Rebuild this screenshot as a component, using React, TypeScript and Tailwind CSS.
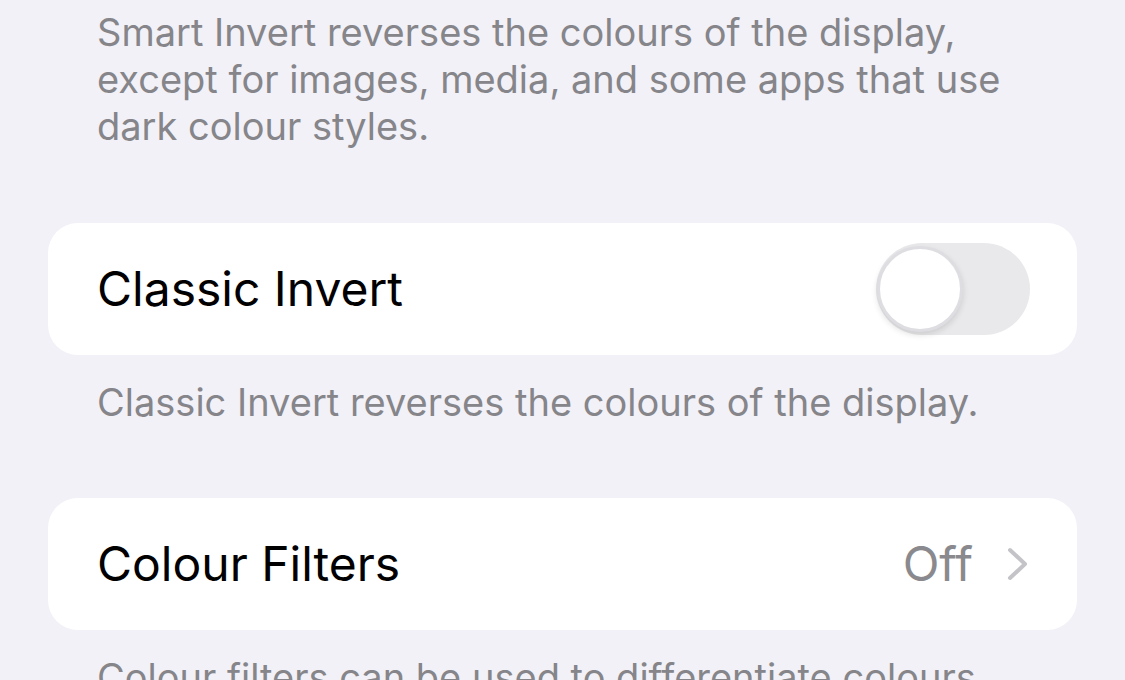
import { useState } from "react";

function Footer({ children }: { children: React.ReactNode }) {
  return (
    <p className="pl-[97px] pr-[100px] text-[38px] leading-[47px] text-[#85858a]">
      {children}
    </p>
  );
}

function Toggle({ on }: { on: boolean }) {
  return (
    <div
      className={`relative h-[92px] w-[154px] rounded-full ${
        on ? "bg-[#34c759]" : "bg-[#e9e9eb]"
      }`}
    >
      <span
        className={`absolute top-[3px] h-[86px] w-[86px] rounded-full border-[3px] border-[#dedee2] bg-white shadow-[0_3px_6px_rgba(0,0,0,0.12)] ${
          on ? "left-[65px]" : "left-[1px]"
        }`}
      />
    </div>
  );
}

export default function App() {
  const [invert, setInvert] = useState(false);

  return (
    <div
      className="h-[680px] w-[1125px] overflow-hidden bg-[#f2f1f7] pt-[9px]"
      style={{ fontFamily: "Inter, 'Noto Sans', sans-serif" }}
    >
      <Footer>
        Smart Invert reverses the colours of the display, except for images, media, and some apps that use dark
        colour styles.
      </Footer>

      {/* classic invert */}
      <div
        className="mx-[48px] mt-[73px] flex h-[132px] items-center justify-between rounded-[30px] bg-white pl-[49px] pr-[47px]"
        onClick={() => setInvert(!invert)}
      >
        <span className="text-[48px] text-black">Classic Invert</span>
        <Toggle on={invert} />
      </div>
      <div className="mt-[24px]">
        <Footer>Classic Invert reverses the colours of the display.</Footer>
      </div>

      {/* colour filters */}
      <div className="mx-[48px] mt-[72px] flex h-[132px] items-center justify-between rounded-[30px] bg-white pl-[49px] pr-[48px]">
        <span className="text-[48px] text-black">Colour Filters</span>
        <div className="flex items-center gap-[34px]">
          <span className="text-[48px] text-[#8a8a8e]">Off</span>
          <svg width="22" height="34" viewBox="0 0 22 34" fill="none">
            <path
              d="M3 3 L18 17 L3 31"
              stroke="#c4c4c8"
              strokeWidth="4"
              strokeLinecap="round"
              strokeLinejoin="round"
            />
          </svg>
        </div>
      </div>
      <div className="mt-[24px]">
        <Footer>Colour filters can be used to differentiate colours by users who are colour blind.</Footer>
      </div>
    </div>
  );
}
